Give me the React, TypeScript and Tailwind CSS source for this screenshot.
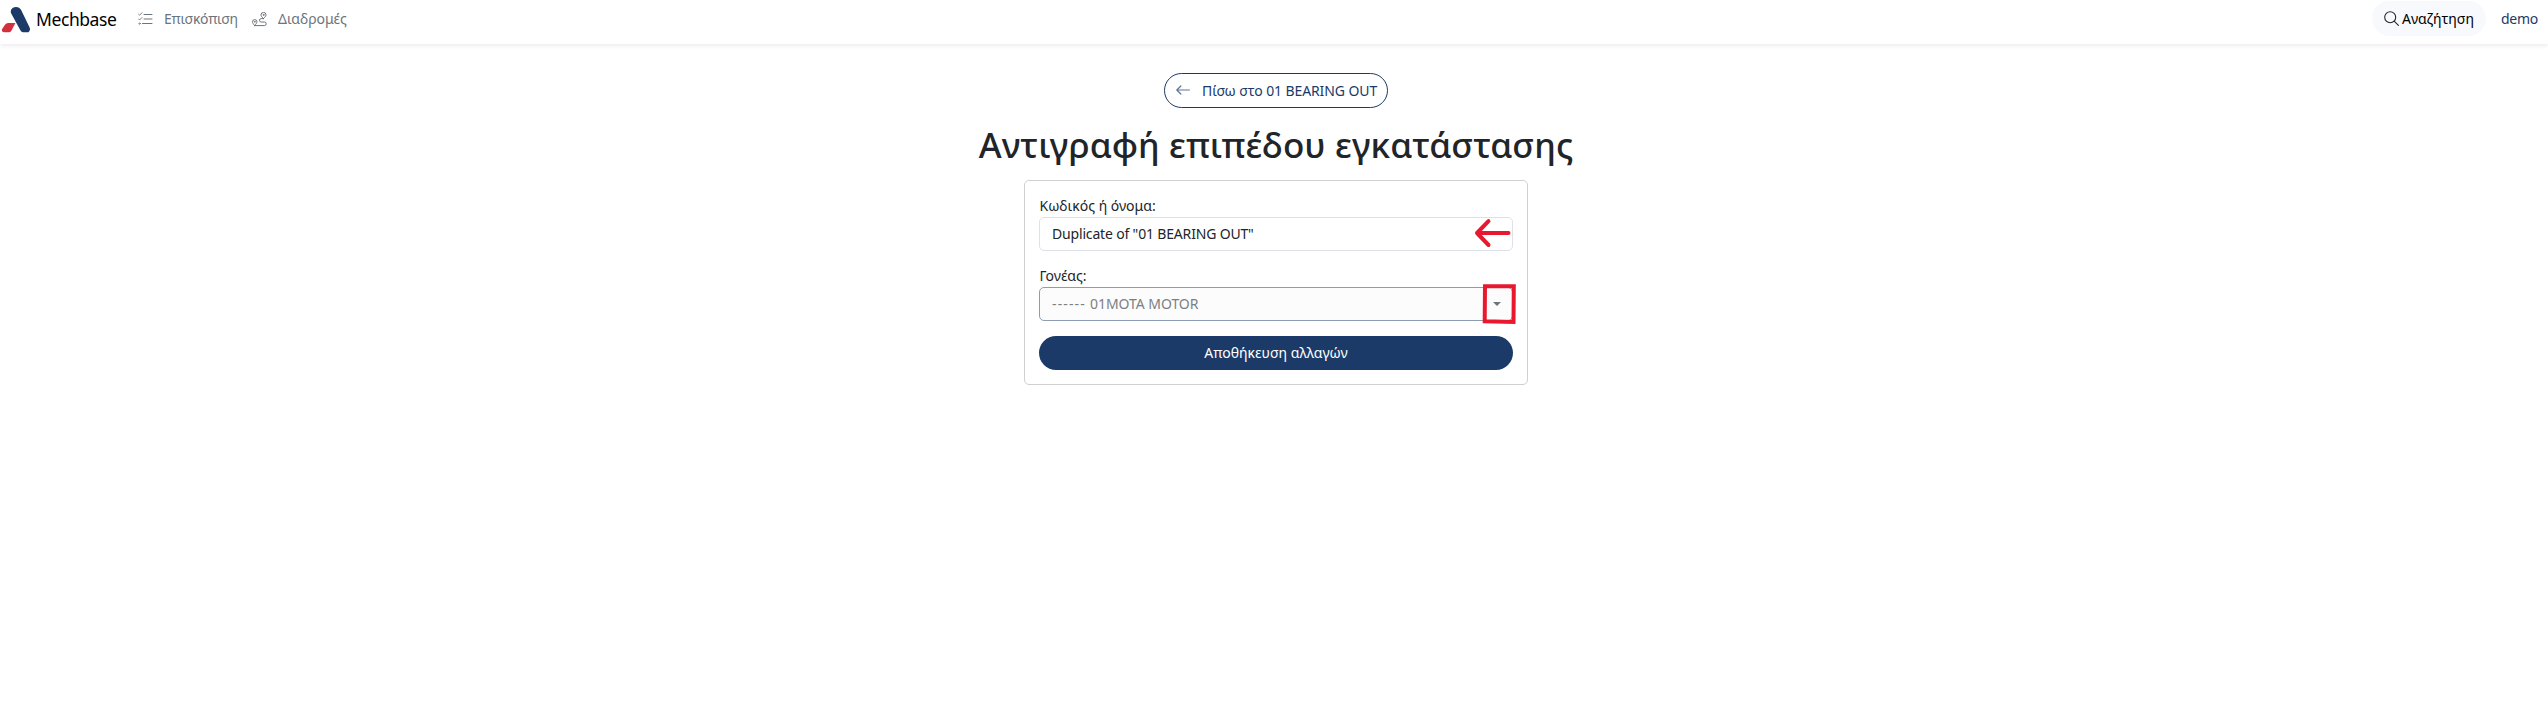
import type { ReactNode } from "react";

function Logo() {
  return (
    <svg className="mt-[7px] h-[26px] w-[30px] shrink-0" viewBox="0 0 30 26">
      <path d="M7.2 16h7.200l-4 7.800Q9.800 25.200 8.200 25.200H3.200Q.6 25.200.9 22.800Q1.100 22 1.600 21.200L4 17.700Q5.100 16 7.200 16Z" fill="#d42f3d" />
      <path d="M11.600 1Q14.500 -.7 17.600.500Q19.100 1.200 20 2.800L28.500 20.300Q29.900 23.300 27.500 25.200H22Q20.400 25.200 19.500 23.500L10.200 6.500Q8.800 3.200 11.600 1Z" fill="#1b3a68" />
    </svg>
  );
}

function ChecklistIcon() {
  return (
    <svg className="h-[14px] w-[15px]" viewBox="0 0 15 14" fill="none" stroke="#6c757d" strokeLinecap="round" strokeLinejoin="round">
      <path d="M.6 2.200l1 1L4 .7M.6 7l1 1L4 5.500" strokeWidth=".9" />
      <path d="M6 2.500H14M6 7H14M4.500 11.500H14" strokeWidth="1" />
      <circle cx="1.600" cy="11.600" r=".7" strokeWidth=".8" />
    </svg>
  );
}

function RouteIcon() {
  return (
    <svg className="h-[15px] w-[15px]" viewBox="0 0 15 15" fill="none" stroke="#6c757d" strokeWidth="1" strokeLinecap="round" strokeLinejoin="round">
      <path d="M11.500 6.500C10.100 5.200 9 4.200 9 2.900a2.500 2.500 0 0 1 5 0c0 1.300-1.100 2.300-2.500 3.600Z" />
      <circle cx="11.500" cy="2.900" r=".5" />
      <path d="M2.700 13.500C1.400 12 .5 11 .5 9.800a2.200 2.200 0 0 1 4.400 0c0 1.200-.9 2.200-2.200 3.700Z" />
      <circle cx="2.700" cy="9.800" r=".4" />
      <path d="M11.500 6.600H9.200a1.700 1.700 0 0 0 0 3.400h3.200a1.800 1.800 0 0 1 0 3.600H2.700" />
    </svg>
  );
}

function SearchIcon() {
  return (
    <svg className="h-[15px] w-[15px]" viewBox="0 0 15 15" fill="none" stroke="#212529" strokeWidth="1.100" strokeLinecap="round">
      <circle cx="6.200" cy="6.200" r="5.500" />
      <path d="M10.200 10.200l4.200 4.200" />
    </svg>
  );
}

function BackArrow() {
  return (
    <svg className="mr-[12px] mb-[2px] h-[10px] w-[14px]" viewBox="0 0 14 10" fill="none" stroke="#5f7596" strokeWidth="1.200" strokeLinecap="round" strokeLinejoin="round">
      <path d="M13.400 5H.8M4.800 1L.8 5l4 4" />
    </svg>
  );
}

function Label({ children }: { children: ReactNode }) {
  return <label className="block h-[22px] pl-[0.5px] leading-[21px]">{children}</label>;
}

export default function App() {
  return (
    <div className="min-h-[721px] bg-white font-['Noto_Sans','Liberation_Sans',sans-serif] text-[14px] leading-[21px] text-[#212529]">
      <header className="flex h-[44px] items-start pl-px shadow-[0_2px_4px_rgba(0,0,0,0.075)]">
        <Logo />
        <span className="mt-[6px] ml-[5px] w-[102px] text-[17.5px] leading-[26px] tracking-[-0.42px] text-black">Mechbase</span>
        <a className="mt-[8px] flex w-[114px] items-start text-[#6c757d]">
          <span className="mt-[4px] mr-[11px]"><ChecklistIcon /></span>
          <span className="tracking-[-0.25px]">Επισκόπιση</span>
        </a>
        <a className="mt-[8px] flex items-start text-[#6c757d]">
          <span className="mt-[4px] mr-[11px]"><RouteIcon /></span>
          <span>Διαδρομές</span>
        </a>
        <button className="mt-px ml-auto flex h-[35px] w-[114px] items-start rounded-full bg-[#f8f9fc] pt-[7px] pl-[12px] text-black">
          <span className="mt-[3px] mr-[3px]"><SearchIcon /></span>
          <span>Αναζήτηση</span>
        </button>
        <a className="mt-[8px] mr-[10px] ml-[14px] w-[38px] pl-px tracking-[-0.25px] text-[#1b3a68]">demo</a>
      </header>

      <main className="flex flex-col items-center pt-[29px] pl-[4px]">
        <button className="flex h-[35px] w-[224px] items-center rounded-full border border-[#1b3a68] pl-[11px] tracking-[-0.1px] whitespace-nowrap text-[#1b3a68]">
          <BackArrow />
          <span>Πίσω στο 01 BEARING OUT</span>
        </button>
        <h1 className="mt-[16px] h-[56px] text-[35px] leading-[42px] font-medium tracking-[0.1px] whitespace-nowrap">
          Αντιγραφή επιπέδου εγκατάστασης
        </h1>
        <form className="relative h-[205px] w-[504px] rounded-[5px] border border-[#d0d0d0] px-[14px] pt-[14px]">
          <Label>Κωδικός ή όνομα:</Label>
          <div className="flex h-[34px] items-start rounded-[5px] border border-[#dee2e6] pt-[5px] pl-[12px] tracking-[-0.17px]">
            Duplicate of "01 BEARING OUT"
          </div>
          <div className="h-[14px]" />
          <Label>Γονέας:</Label>
          <div className="flex h-[34px] items-start justify-between rounded-[5px] border border-[#8d9bb5] bg-[#fcfcfd] pt-[5px] pr-[11px] pl-[12px] text-[#7b8085]">
            <span className="flex">
              <span className="w-[38px] tracking-[1.12px]">------</span>
              <span className="tracking-[-0.05px]">01MOTA MOTOR</span>
            </span>
            <svg className="mt-[9px] h-[4px] w-[8px]" viewBox="0 0 8 4"><path d="M0 0h8L4 4Z" fill="#6c757d" /></svg>
          </div>
          <button type="button" className="mt-[15px] h-[34px] w-full rounded-full bg-[#1b3a68] pb-px text-white">
            Αποθήκευση αλλαγών
          </button>
          <svg className="absolute top-[34px] right-[6px] h-[116px] w-[56px]" viewBox="0 0 56 116" fill="none" stroke="#e8192f" strokeLinecap="round" strokeLinejoin="round">
            <path d="M43.500 18H12M23.500 6.200L12 18l11.500 12" strokeWidth="4" />
            <path d="M20 71.300H48.800L48.500 107L19.700 106.300Z" strokeWidth="4" strokeLinejoin="miter" />
          </svg>
        </form>
      </main>
    </div>
  );
}
